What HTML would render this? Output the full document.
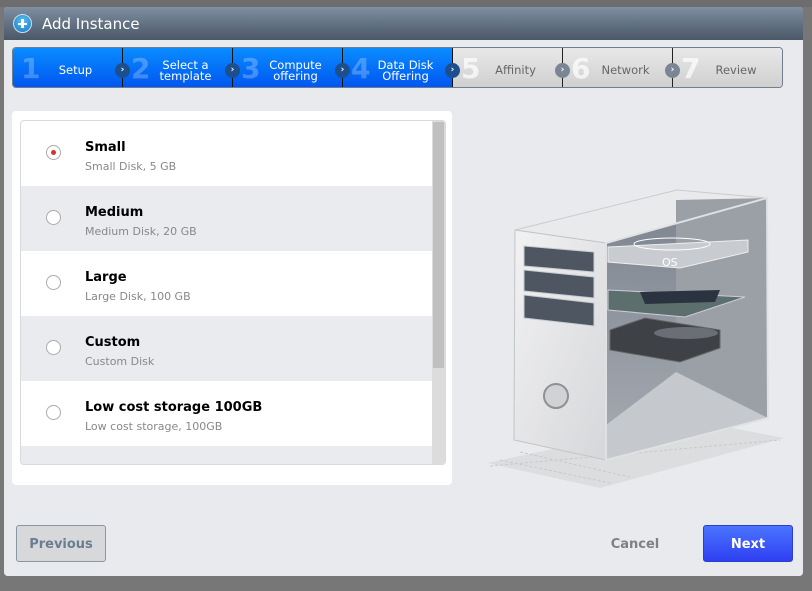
<!DOCTYPE html>
<html><head><meta charset="utf-8"><style>
*{margin:0;padding:0;box-sizing:border-box}
body{width:812px;height:591px;background:#777;font-family:"DejaVu Sans","Liberation Sans",sans-serif;position:relative;overflow:hidden}
.bgline{position:absolute;left:0;top:0;width:812px;height:7px;background:#6d6d6d}
.dlg{position:absolute;left:4px;top:7px;width:799px;height:569px;background:#e9e9ea;border-radius:4px;overflow:hidden}
.title{height:33px;background:linear-gradient(#7d8fa1,#4a5766);color:#fff;font-size:15px;line-height:34px;padding-left:38px;position:relative}
.title .ic{position:absolute;left:9px;top:7px;width:19px;height:19px;border-radius:50%;background:radial-gradient(circle at 50% 35%,#5bc0f2,#1578c3);border:1px solid #cde}
.title .ic:before{content:"";position:absolute;left:4px;top:7.5px;width:9px;height:2.5px;background:#fff}
.title .ic:after{content:"";position:absolute;left:7.2px;top:4.3px;width:2.5px;height:9px;background:#fff}
.body{position:absolute;top:33px;left:0;right:0;bottom:0;background:#e9eaed}
.steps{position:absolute;left:8px;top:7px;width:771px;height:41px;border:1px solid #6f7d8c;border-radius:4px;overflow:hidden;display:flex}
.st{width:110px;height:100%;position:relative;border-right:1px solid #111;color:#fff;font-size:11.5px;line-height:11px;flex:none}
.st.on{background:linear-gradient(#0a8cff,#0057f0)}
.st.off{background:linear-gradient(#e8e8e8,#d0d0d0);color:#666;border-right:1px solid #222}
.st:last-child{border-right:none}
.st .n{position:absolute;left:8px;top:7px;font-size:28px;font-weight:bold;line-height:28px;color:rgba(255,255,255,.25)}
.st.off .n{color:rgba(255,255,255,.7)}
.st .t{position:absolute;left:16px;right:0;top:6px;bottom:0;display:flex;align-items:center;justify-content:center;text-align:center}
.arr{position:absolute;top:17px;width:15px;height:15px;border-radius:50%;background:#1d4f8c;color:#fff;font-size:9px;line-height:15px;text-align:center;font-weight:bold;z-index:2}
.arr.g{background:#7a8694}
.panel{position:absolute;left:8px;top:71px;width:440px;height:374px;background:#fff;border-radius:4px}
.list{position:absolute;left:8px;top:9px;width:426px;height:345px;border:1px solid #d6d9de;border-radius:4px;overflow:hidden}
.row{height:65px;position:relative}
.row.g{background:#e9ebef}
.rad{position:absolute;left:25px;top:24px;width:15px;height:15px;border-radius:50%;border:1px solid #aaa;background:#fff}
.rad.on:after{content:"";position:absolute;left:4px;top:4px;width:5px;height:5px;border-radius:50%;background:#d4342a}
.nm{position:absolute;left:64px;top:19px;font-size:13px;font-weight:bold;color:#000}
.ds{position:absolute;left:64px;top:39px;font-size:11px;color:#888}
.sb{position:absolute;right:0;top:0;width:13px;height:100%;background:#dcdcdc}
.sb i{position:absolute;left:1px;top:1px;width:11px;height:246px;background:#c0c0c0}
.btn{position:absolute;top:485px;height:37px;border-radius:3px;font-size:13px;font-weight:bold;text-align:center;line-height:37px}
.prev{left:12px;width:90px;background:#d7d8da;border:1px solid #8a96a3;color:#6b7d91}
.cancel{left:596px;width:70px;color:#808080;line-height:40px}
.next{left:699px;width:90px;background:linear-gradient(#4b74ff,#2e3ff2);border:1px solid #2a3fd0;color:#fff}
</style></head><body>
<div class="bgline"></div>
<div class="dlg">
<div class="title"><span class="ic"></span>Add Instance</div>
<div class="body">
<div class="steps">
<div class="st on"><span class="n">1</span><span class="t">Setup</span></div>
<div class="st on"><span class="n">2</span><span class="t">Select a<br>template</span></div>
<div class="st on"><span class="n">3</span><span class="t">Compute<br>offering</span></div>
<div class="st on"><span class="n">4</span><span class="t">Data Disk<br>Offering</span></div>
<div class="st off"><span class="n">5</span><span class="t">Affinity</span></div>
<div class="st off"><span class="n">6</span><span class="t">Network</span></div>
<div class="st off"><span class="n">7</span><span class="t">Review</span></div>
</div>
<span class="arr" style="left:111px;top:23px">›</span>
<span class="arr" style="left:221px;top:23px">›</span>
<span class="arr" style="left:331px;top:23px">›</span>
<span class="arr" style="left:441px;top:23px">›</span>
<span class="arr g" style="left:551px;top:23px">›</span>
<span class="arr g" style="left:661px;top:23px">›</span>
<div class="panel"><div class="list">
<div class="row"><span class="rad on"></span><span class="nm">Small</span><span class="ds">Small Disk, 5 GB</span></div>
<div class="row g"><span class="rad"></span><span class="nm">Medium</span><span class="ds">Medium Disk, 20 GB</span></div>
<div class="row"><span class="rad"></span><span class="nm">Large</span><span class="ds">Large Disk, 100 GB</span></div>
<div class="row g"><span class="rad"></span><span class="nm">Custom</span><span class="ds">Custom Disk</span></div>
<div class="row"><span class="rad"></span><span class="nm">Low cost storage 100GB</span><span class="ds">Low cost storage, 100GB</span></div>
<div class="row g"></div>
<div class="sb"><i></i></div>
</div></div>
<svg style="position:absolute;left:0;top:0" width="799" height="536" viewBox="4 40 799 536">
<defs><linearGradient id="fr" x1="0" y1="0" x2="1" y2="1"><stop offset="0" stop-color="#f2f2f3"/><stop offset="1" stop-color="#d6d7da"/></linearGradient>
<linearGradient id="in" x1="0" y1="0" x2="0" y2="1"><stop offset="0" stop-color="#7d848e"/><stop offset="1" stop-color="#a7acb3"/></linearGradient></defs>
<g fill="#dcdddf"><polygon points="487,463 600,488 784,438 690,420"/></g>
<g stroke="#c8c9cc" stroke-dasharray="3,2" fill="none"><path d="M500,460 L610,483 M520,452 L630,477 M490,466 L780,440 M560,448 L700,425"/></g>
<polygon points="515,230 677,190 767,198 606,243" fill="#e9eaec" stroke="#c9cbce"/>
<polygon points="606,243 767,198 768,418 606,460" fill="url(#in)"/>
<polygon points="676,200 767,198 768,418 676,372" fill="#9ba0a7"/>
<polygon points="606,425 676,372 768,418 606,460" fill="#c5c8cc"/>
<polygon points="515,230 606,243 606,460 514,440" fill="url(#fr)" stroke="#c2c4c8"/>
<polygon points="606,243 767,198 768,418 606,460" fill="none" stroke="#dfe1e3" stroke-width="2"/>
<g fill="#4d5661" stroke="#c8ccd0"><polygon points="524,246 594,252 594,272 524,266"/><polygon points="524,270 594,277 594,298 524,291"/><polygon points="524,295 594,303 594,326 524,318"/></g>
<circle cx="556" cy="396" r="12" fill="#d0d2d4" stroke="#8d9095" stroke-width="2"/>
<polygon points="608,247 748,240 748,252 680,268 608,262" fill="#c8cbcf" stroke="#eee"/>
<ellipse cx="672" cy="244" rx="38" ry="6" fill="none" stroke="#fff"/>
<text x="662" y="266" font-size="11" fill="#fff" font-family="DejaVu Sans">OS</text>
<polygon points="608,290 745,297 685,317 608,310" fill="#5d6f6c" stroke="#ccd"/>
<polygon points="640,292 720,290 715,302 645,304" fill="#2b3340"/>
<polygon points="610,330 645,318 720,330 720,348 680,362 610,350" fill="#3e4146" stroke="#666"/>
<ellipse cx="686" cy="333" rx="32" ry="6" fill="#6b6f75"/>
</svg>
<div class="btn prev">Previous</div>
<div class="btn cancel">Cancel</div>
<div class="btn next">Next</div>
</div></div>
</body></html>
